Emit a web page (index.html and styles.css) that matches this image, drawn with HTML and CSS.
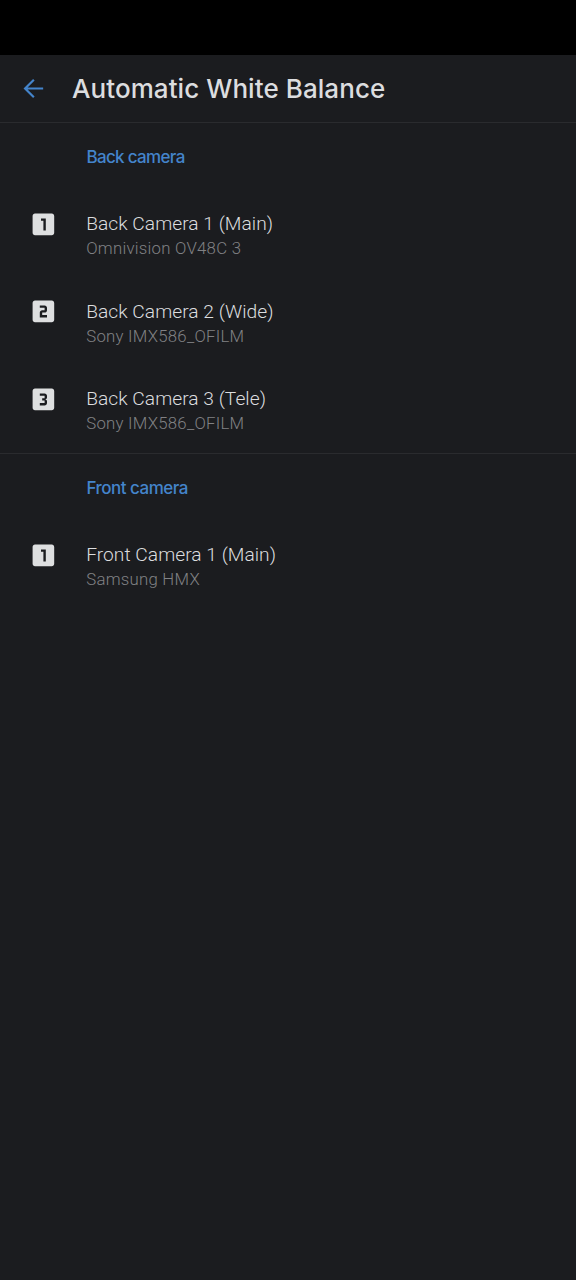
FILE: index.html
```html
<!DOCTYPE html>
<html lang="en">
<head>
<meta charset="utf-8">
<title>Automatic White Balance</title>
<link rel="stylesheet" href="styles.css">
</head>
<body>
<div class="status-bar"></div>
<header class="app-bar">
  <svg class="back" viewBox="0 0 24 24"><path d="M20 12H5M12.3 4.7L5 12l7.3 7.3"/></svg>
  <h1 class="title">Automatic White Balance</h1>
</header>
<main>
  <section class="group">
    <h2 class="group-title back-group">Back camera</h2>
    <div class="item">
      <svg class="icon" viewBox="0 0 24 24"><path d="M19 3H5c-1.1 0-2 .9-2 2v14c0 1.1.9 2 2 2h14c1.1 0 2-.9 2-2V5c0-1.1-.9-2-2-2zm-5 14h-2V9h-2V7h4v10z"/></svg>
      <div class="text"><div class="name">Back Camera 1 (Main)</div><div class="sensor">Omnivision OV48C 3</div></div>
    </div>
    <div class="item">
      <svg class="icon" viewBox="0 0 24 24"><path d="M19 3H5c-1.1 0-2 .9-2 2v14c0 1.1.9 2 2 2h14c1.1 0 2-.9 2-2V5c0-1.1-.9-2-2-2zm-4 8c0 1.11-.9 2-2 2h-2v2h4v2H9v-4c0-1.11.9-2 2-2h2V9H9V7h4c1.1 0 2 .89 2 2v2z"/></svg>
      <div class="text"><div class="name">Back Camera 2 (Wide)</div><div class="sensor">Sony IMX586_OFILM</div></div>
    </div>
    <div class="item">
      <svg class="icon" viewBox="0 0 24 24"><path d="M19 3H5c-1.1 0-2 .9-2 2v14c0 1.1.9 2 2 2h14c1.1 0 2-.9 2-2V5c0-1.1-.9-2-2-2zm-4 7.5c0 .83-.67 1.5-1.5 1.5.83 0 1.5.67 1.5 1.5V15c0 1.11-.9 2-2 2H9v-2h4v-2h-2v-2h2V9H9V7h4c1.1 0 2 .89 2 2v1.5z"/></svg>
      <div class="text"><div class="name">Back Camera 3 (Tele)</div><div class="sensor">Sony IMX586_OFILM</div></div>
    </div>
  </section>
  <section class="group">
    <h2 class="group-title">Front camera</h2>
    <div class="item">
      <svg class="icon" viewBox="0 0 24 24"><path d="M19 3H5c-1.1 0-2 .9-2 2v14c0 1.1.9 2 2 2h14c1.1 0 2-.9 2-2V5c0-1.1-.9-2-2-2zm-5 14h-2V9h-2V7h4v10z"/></svg>
      <div class="text"><div class="name">Front Camera 1 (Main)</div><div class="sensor">Samsung HMX</div></div>
    </div>
  </section>
</main>
</body>
</html>
```
FILE: styles.css
```css
* { box-sizing: border-box; }
body {
  margin: 0;
  min-height: 1280px;
  background: #1b1c1f;
  color: #dcdddf;
  font-family: Roboto, sans-serif;
}
.status-bar { height: 55px; background: #000; }
.app-bar {
  display: flex;
  align-items: center;
  height: 67px;
  padding-left: 19px;
}
.back {
  width: 29px;
  height: 29px;
  fill: none;
  stroke: #4484cb;
  stroke-width: 1.8;
}
.title {
  margin: 0 0 0 24px;
  font: 500 26px/34px Inter, sans-serif;
  letter-spacing: 0.07px;
  white-space: nowrap;
}
.group { border-top: 1px solid #2a2b2e; }
.group-title {
  display: flex;
  align-items: center;
  height: 67.5px;
  margin: 0;
  padding-left: 86.4px;
  color: #4484cb;
  font: 500 17px/24px Inter, sans-serif;
  letter-spacing: -0.5px;
}
.back-group { letter-spacing: -0.66px; }
.item {
  display: flex;
  height: 87.5px;
  padding: 19.5px 0 0 28.8px;
}
.icon { width: 28.8px; height: 28.8px; margin-top: -0.4px; fill: #dedfe0; }
.text { margin-left: 28.6px; white-space: nowrap; }
.name { font-size: 19.2px; line-height: 28px; font-weight: 300; letter-spacing: 0.03px; }
.sensor { font-size: 16.8px; line-height: 21px; font-weight: 300; color: #808184; letter-spacing: 0.25px; }
```
